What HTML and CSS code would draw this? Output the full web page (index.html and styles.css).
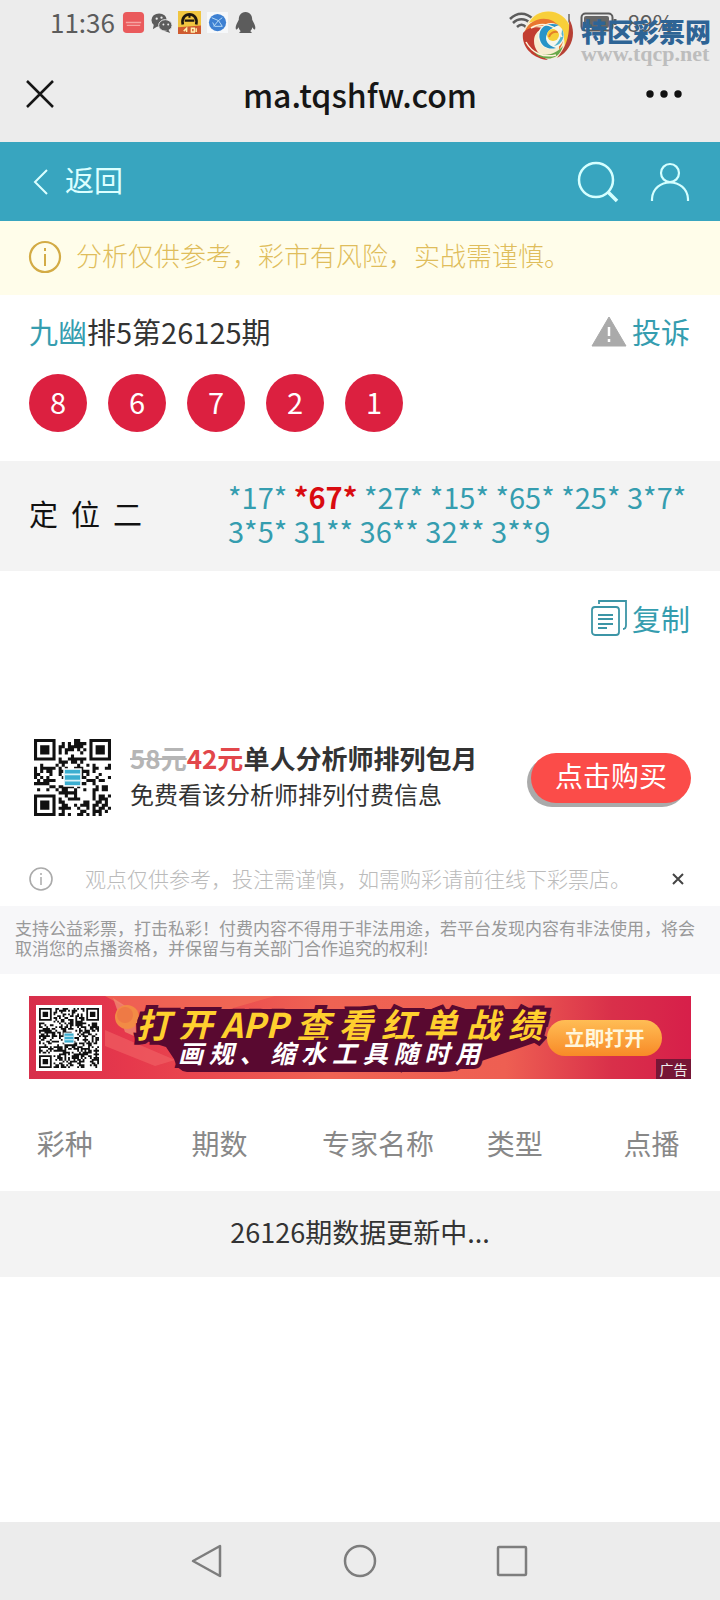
FILE: index.html
```html
<!DOCTYPE html>
<html lang="zh-CN">
<head>
<meta charset="utf-8">
<meta name="viewport" content="width=device-width, initial-scale=1">
<title>ma.tqshfw.com</title>
<link rel="stylesheet" href="styles.css">
</head>
<body>
<header class="chrome">
  <div class="status">
    <span class="clock">11:36</span>
    <svg class="app" viewBox="0 0 24 24"><rect x="1" y="1" width="22" height="22" rx="4" fill="#ea5a5c"/><path d="M4 12h16M5 15h14" stroke="#f6a5a2" stroke-width="1.5"/></svg>
    <svg class="app" viewBox="0 0 24 24"><ellipse cx="9.500" cy="9.500" rx="8" ry="7" fill="#5c5c5c"/><path d="M4 14l-1 5 5-3z" fill="#5c5c5c"/><ellipse cx="16" cy="15" rx="7" ry="6" fill="#5c5c5c" stroke="#ececec"/><path d="M19 19l2 4-5-2z" fill="#5c5c5c"/><g fill="#ececec"><circle cx="7" cy="8" r="1.200"/><circle cx="12" cy="7" r="1.200"/><circle cx="14" cy="14" r="1"/><circle cx="19" cy="14" r="1"/></g></svg>
    <svg class="app" viewBox="0 0 24 24"><path fill="#f0c540" d="M0 0h24v24H0z"/><path fill="#cf5b30" d="M0 17l24-2v9H0z"/><path d="M5 14C2 0 22 0 19 14" fill="none" stroke="#1d1710" stroke-width="2.800"/><path d="M7 10h10M12 3v4" stroke="#1d1710" stroke-width="2.200"/><path d="M6 21l3-3v4M14 18h3v4h-3zM19 18v4" stroke="#fff1b0" stroke-width="1.500" fill="none"/></svg>
    <svg class="app" viewBox="0 0 24 24"><path fill="#f6f8fa" d="M1 1h22v22H1z"/><circle cx="12" cy="12" r="9" fill="#3d80d2"/><path d="M6 7l7 3 4-3M13 10l-5 6M13 10l4 6M7 12l2 4 8 0" stroke="#b9dcf7" stroke-width="1" fill="none"/></svg>
    <svg class="app" viewBox="0 0 24 24"><path fill="#5c5c5c" d="M12 1c-5 0-7 4-7 8-2 4-4 7-3 10 1 1 2-1 3-2 0 2 1 3 2 4-2 1-2 2 0 2h10c2 0 2-1 0-2 1-1 2-2 2-4 1 1 2 3 3 2 1-3-1-6-3-10 0-4-2-8-7-8z"/></svg>
    <span class="signals">
      <svg class="wifi" viewBox="0 0 62 24"><path d="M1 9C8 2 17 2 24 9M4 13c5-5 12-5 17 0M8 17c3-3 6-3 9 0" fill="none" stroke="#5c5c5c" stroke-width="2.500"/><path d="M38 22v-6M44 22V12M50 22V8M60 22V4" stroke="#888" stroke-width="2"/></svg>
      <svg class="battery" viewBox="0 0 38 20"><rect x="1.500" y="1.500" width="31" height="17" rx="4" fill="none" stroke="#5c5c5c" stroke-width="2"/><rect x="4" y="4" width="25" height="12" rx="2" fill="#666"/><path d="M35 7v6" stroke="#5c5c5c" stroke-width="3"/></svg>
      <span class="percent">89%</span>
    </span>
  </div>
  <div class="titlebar">
    <button class="icon-btn" aria-label="关闭"><svg class="i28" viewBox="0 0 28 28"><path d="M1 1l26 26M27 1L1 27" stroke="#161616" stroke-width="2.500" fill="none"/></svg></button>
    <h1 class="domain">ma.tqshfw.com</h1>
    <button class="icon-btn more" aria-label="更多"><svg class="dots" viewBox="0 0 36 8"><g fill="#111"><circle cx="4" cy="4" r="3.700"/><circle cx="18" cy="4" r="3.700"/><circle cx="32" cy="4" r="3.700"/></g></svg></button>
  </div>
  <div class="watermark">
    <svg class="swirl" viewBox="0 0 52 52">
      <circle cx="26" cy="26" r="24" fill="#f7edd0"/>
      <path fill="#f8cf3a" d="M7 14C14-2 43-3 49 21c2 10-2 18-7 22 3-16-4-28-17-30-8-1-14-1-18 1z"/>
      <path fill="#e9762f" d="M2 27C3 13 19 6 31 12c12 7 13 20 6 29 1-13-6-23-17-24C10 17 5 21 2 27z"/>
      <path fill="#c23d30" d="M1 24C-1 38 11 50 26 51c-9-5-14-11-14-19 0-6 3-10 9-13C13 17 5 19 1 24z"/>
      <path fill="#b64035" d="M47 10c8 13 4 31-12 39 9-11 13-22 12-39z"/>
      <path fill="#69a84a" d="M10 40c9 9 22 7 31-3-3 11-12 14-19 12-5-1-9-4-12-9z"/>
      <circle cx="29" cy="27" r="13" fill="#f4f6ee"/>
      <path fill="#2794c8" d="M37 16c-14-4-22 5-19 15 2 7 9 10 16 8-8-2-12-8-9-14 2-5 7-7 12-9z"/>
      <path fill="#54b5cf" d="M40 20c4 7 0 16-8 17 5-4 8-10 8-17z"/>
      <circle cx="31" cy="26" r="6" fill="#f6cf37"/><path d="M27 28c1-4 5-6 9-5" stroke="#e47e28" stroke-width="2" fill="none"/>
      <path d="M4 33c6 11 17 16 30 13M9 19c11-7 26-3 31 9" fill="none" stroke="#fff3dc" stroke-width="1.500"/>
    </svg>
    <span class="mark-text"><span class="mark-name">特区彩票网</span><span class="mark-url">www.tqcp.net</span></span>
  </div>
</header>

<nav class="topnav">
  <a class="back" href="#"><svg class="chev" viewBox="0 0 16 26"><path d="M14 1L2 13l12 12" fill="none" stroke="#dcffff" stroke-width="2"/></svg><span class="back-text">返回</span></a>
  <a href="#" aria-label="搜索"><svg class="i42" viewBox="0 0 42 42"><circle cx="19" cy="19" r="17" fill="none" stroke="#d5ffff" stroke-width="2.500"/><path d="M31 31l9 9" stroke="#d5ffff" stroke-width="3.500"/></svg></a>
  <a href="#" aria-label="我的"><svg class="i40" viewBox="0 0 40 40"><g fill="none" stroke="#d5ffff" stroke-width="2.200"><circle cx="20" cy="11" r="9"/><path d="M2 39V37C3 15 37 15 38 37v2"/></g></svg></a>
</nav>

<div class="notice"><svg class="i34" viewBox="0 0 34 34"><circle cx="17" cy="17" r="15" fill="none" stroke="#d3ab45" stroke-width="2.200"/><path d="M17 14v12M17 8v3" stroke="#d3ab45" stroke-width="2"/></svg><p class="notice-text">分析仅供参考，彩市有风险，实战需谨慎。</p></div>

<main class="content">
  <section class="draw">
    <div class="draw-head">
      <h2 class="issue"><a href="#" class="teal">九幽</a>排5第26125期</h2>
      <a href="#" class="teal action"><svg class="warn" viewBox="0 0 36 31"><path d="M18 1L35 30H1z" fill="#aaa" stroke="#aaa" stroke-linejoin="round"/><path d="M18 11v9M18 23v3" stroke="#fff" stroke-width="2.500"/></svg>投诉</a>
    </div>
    <div class="balls"><span class="ball">8</span><span class="ball">6</span><span class="ball">7</span><span class="ball">2</span><span class="ball">1</span></div>
  </section>

  <section class="picks">
    <span class="pick-label">定  位  二</span>
    <p class="pick-list">*17* <b class="hit">*67*</b> *27* *15* *65* *25* 3*7* 3*5* 31** 36** 32** 3**9</p>
  </section>

  <div class="copy-row"><button class="teal action"><svg class="copy" viewBox="0 0 36 36"><g fill="none" stroke="#3c95a6" stroke-width="1.800"><rect x="1" y="7" width="27" height="28" rx="3"/><path d="M8 4V1h27v24c0 3-1 4-3 4M7 15h15M7 19h15M7 24h15M7 28h9"/></g></svg>复制</button></div>

  <section class="promo">
    <svg class="qr" data-size="25" data-seed="58" role="img" aria-label="二维码"></svg>
    <div class="promo-text">
      <p class="promo-title"><s class="old">58元</s><span class="price">42元</span>单人分析师排列包月</p>
      <p class="promo-sub">免费看该分析师排列付费信息</p>
    </div>
    <button class="buy">点击购买</button>
  </section>

  <div class="tip">
    <svg class="i24" viewBox="0 0 24 24"><circle cx="12" cy="12" r="11" fill="none" stroke="#aaa" stroke-width="1.600"/><path d="M12 10v8M12 6v2" stroke="#aaa" stroke-width="1.500"/></svg>
    <p class="tip-text">观点仅供参考，投注需谨慎，如需购彩请前往线下彩票店。</p>
    <button class="icon-btn" aria-label="关闭提示"><svg class="i12" viewBox="0 0 12 12"><path d="M1 1l10 10M11 1L1 11" stroke="#444" stroke-width="2"/></svg></button>
  </div>

  <p class="legal">支持公益彩票，打击私彩！付费内容不得用于非法用途，若平台发现内容有非法使用，将会取消您的点播资格，并保留与有关部门合作追究的权利!</p>

  <a class="banner" href="#">
    <svg class="banner-art" viewBox="0 0 662 83" preserveAspectRatio="none">
      <defs><linearGradient id="bg"><stop offset="0" stop-color="#d72f4b"/><stop offset=".15" stop-color="#e6384c"/><stop offset=".45" stop-color="#ef6353"/><stop offset=".72" stop-color="#ee5f52"/><stop offset=".88" stop-color="#d9304a"/><stop offset="1" stop-color="#d71f4a"/></linearGradient></defs>
      <path fill="url(#bg)" d="M0 0h662v83H0z"/>
      <path fill="#f27157" opacity=".7" d="M76 0h170l-70 20-60 2z"/>
      <path fill="#ef5e62" opacity=".7" d="M76 34l70 30-20 6-50-20z"/>
      <path fill="#f08a70" opacity=".8" d="M84 2l34 22-4 20-18-8z"/>
      <circle cx="98" cy="21" r="12" fill="#f28b45"/><circle cx="96" cy="19" r="8" fill="#ee7a45"/>
      <path fill="#590930" d="M108 28q0-14 18-15h378q16 2 13 19-1 12-12 15l-70 24q-6 5-22 5H158q-10-1-13-13l-8-12-26-8z"/>
    </svg>
    <span class="qr-card"><svg class="qr-small" data-size="33" data-seed="126" role="img" aria-label="二维码"></svg></span>
    <span class="slogan"><span class="slogan-main">打开APP查看红单战绩</span><span class="slogan-sub">画规、缩水工具随时用</span></span>
    <span class="open">立即打开</span>
    <span class="ad">广告</span>
  </a>

  <table class="list">
    <thead><tr><th class="c18">彩种</th><th class="c25">期数</th><th class="c19">专家名称</th><th class="c19">类型</th><th class="c19">点播</th></tr></thead>
    <tbody><tr><td colspan="5">26126期数据更新中...</td></tr></tbody>
  </table>
</main>

<footer class="sysnav">
  <button class="icon-btn" aria-label="返回"><svg class="i36" viewBox="0 0 36 36"><path d="M31 3v30L4 18z" fill="none" stroke="#7d7d7d" stroke-width="2.500" stroke-linejoin="round"/></svg></button>
  <button class="icon-btn" aria-label="主页"><svg class="i36" viewBox="0 0 36 36"><circle cx="18" cy="18" r="15" fill="none" stroke="#7d7d7d" stroke-width="2.500"/></svg></button>
  <button class="icon-btn" aria-label="最近任务"><svg class="i36" viewBox="0 0 36 36"><rect x="3" y="4" width="28" height="28" rx="1" fill="none" stroke="#7d7d7d" stroke-width="2.500"/></svg></button>
</footer>
<script src="qr.js"></script>
</body>
</html>
```
FILE: styles.css
```css
* { box-sizing: border-box; }
body {
  margin: 0;
  min-height: 100vh;
  display: flex;
  flex-direction: column;
  background: #fff;
  color: #333;
  font-family: "Noto Sans CJK SC", sans-serif;
  font-size: 29px;
}
h1, h2, p { margin: 0; font-weight: 400; }
a { color: inherit; text-decoration: none; }
button { font: inherit; color: inherit; background: none; border: 0; padding: 0; }
svg { display: block; flex: none; }
.i12 { width: 12px; height: 12px; }
.i24 { width: 24px; height: 24px; }
.i28 { width: 28px; height: 28px; }
.i34 { width: 34px; height: 34px; }
.i36 { width: 36px; height: 36px; }
.i40 { width: 40px; height: 40px; }
.i42 { width: 42px; height: 42px; }
.icon-btn { display: flex; align-items: center; }
.teal { color: #359daf; }
.action { display: flex; align-items: center; gap: 5px; line-height: 40px; }

.chrome { position: relative; background: #ececec; }
.status { display: flex; align-items: center; gap: 5px; height: 46px; padding: 0 46px 2px 50px; color: #5c5c5c; font-size: 26px; line-height: 30px; }
.clock { margin-right: 2px; }
.app { width: 23px; height: 23px; }
.signals { display: flex; align-items: center; gap: 9px; margin-left: auto; }
.wifi { width: 62px; height: 24px; }
.battery { width: 38px; height: 20px; }
.percent { font-size: 23px; }
.titlebar { display: grid; grid-template-columns: 1fr auto 1fr; align-items: center; height: 96px; padding: 0 26px; }
.more { justify-self: end; margin-right: 12px; }
.domain { color: #161616; font-size: 32px; font-weight: 500; line-height: 44px; }
.dots { width: 36px; height: 8px; }
.watermark { position: absolute; top: 9px; right: 9px; display: flex; gap: 7px; }
.swirl { width: 52px; height: 52px; }
.mark-text { display: flex; flex-direction: column; padding-top: 8px; }
.mark-name { color: #2e6495; font-size: 26px; font-weight: 900; line-height: 28px; }
.mark-url { color: #bdbdbd; font-family: "Liberation Serif", serif; font-size: 22px; font-weight: 700; line-height: 18px; }

.topnav { display: flex; align-items: center; gap: 31px; height: 79px; padding: 0 30px 0 33px; background: #38a5bf; color: #dcffff; }
.back { display: flex; align-items: center; gap: 16px; margin-right: auto; line-height: 40px; }
.back-text { padding-bottom: 5px; }
.chev { width: 16px; height: 26px; }
.notice { display: flex; align-items: center; gap: 14px; min-height: 74px; padding: 0 28px 2px; background: #fffdea; color: #dfbd5c; font-size: 26px; }
.notice-text { padding-bottom: 5px; font-weight: 300; }

.content { flex: 1; }
.draw { padding: 16px 30px 29px 29px; }
.draw-head { display: flex; justify-content: space-between; align-items: center; }
.issue { font-size: 29px; line-height: 40px; }
.warn { width: 36px; height: 31px; }
.balls { display: flex; gap: 21px; margin-top: 23px; }
.ball { width: 58px; height: 58px; border-radius: 50%; background: #dc2040; color: #fff; line-height: 54px; text-align: center; }
.picks { display: grid; grid-template-columns: 199px 1fr; align-items: center; padding: 18px 29px 24px; background: #f3f3f3; }
.pick-label { color: #111; white-space: pre; line-height: 40px; }
.pick-list { color: #359daf; line-height: 34px; }
.hit { color: #d90b10; }
.copy-row { display: flex; justify-content: flex-end; padding: 27px 30px 101px; }
.copy { width: 36px; height: 36px; }

.promo { display: flex; align-items: center; padding: 0 29px 0 34px; }
.qr { width: 77px; height: 77px; }
.promo-text { flex: 1; margin-left: 19px; padding-bottom: 3px; line-height: 36px; }
.promo-title { font-size: 26px; font-weight: 700; }
.promo-sub { font-size: 24px; }
.old { color: #b5b5b5; }
.price { color: #e2474b; }
.buy { width: 160px; height: 50px; padding-bottom: 6px; border-radius: 25px; background: #fb4c49; color: #fff; font-size: 28px; line-height: 44px; box-shadow: -4px 4px 0 #aaa; }
.tip { display: flex; align-items: center; min-height: 54px; margin-top: 36px; padding: 0 36px 0 29px; }
.tip-text { flex: 1; margin-left: 32px; padding-bottom: 3px; color: #bbb; font-size: 21px; font-weight: 300; }
.legal { padding: 12px 15px 16px; background: #f7f7f9; color: #999; font-size: 17px; line-height: 20px; }

.banner { position: relative; display: flex; align-items: center; height: 83px; margin: 22px 29px 17px; padding-left: 7px; }
.banner-art { position: absolute; inset: 0; width: 100%; height: 100%; }
.qr-card { position: relative; padding: 3px; background: #fff; }
.qr-small { width: 60px; height: 60px; }
.slogan { position: relative; display: flex; flex-direction: column; width: 406px; margin-left: 34px; padding-bottom: 4px; font-style: italic; white-space: nowrap; }
.slogan-main, .slogan-sub { font-weight: 700; text-align: justify; text-align-last: justify; -webkit-text-stroke: 8px #590930; paint-order: stroke fill; stroke-linejoin: round; }
.slogan-main { color: #ffd02e; font-size: 34px; line-height: 32px; }
.slogan-sub { width: 302px; margin-left: 42px; color: #fff; font-size: 25px; line-height: 24px; }
.open { position: relative; width: 115px; margin-left: 5px; border-radius: 18px; background: linear-gradient(#ffbd55, #f88a27); color: #fff6dc; font-size: 20px; font-weight: 700; line-height: 36px; text-align: center; }
.ad { position: absolute; right: 0; bottom: 0; width: 35px; background: #761636; color: #eee; font-size: 14px; line-height: 20px; text-align: center; }

.list { width: 100%; table-layout: fixed; border-collapse: collapse; text-align: center; }
.list th { height: 95px; padding: 0 0 2px; color: #888; font-size: 28px; font-weight: 400; }
.list td { height: 86px; padding: 0 0 5px; background: #f3f3f3; font-size: 27px; }
.c18 { width: 18%; }
.c25 { width: 25%; }
.c19 { width: 19%; }

.sysnav { display: flex; justify-content: center; gap: 117px; height: 78px; background: #ececec; }
```
FILE: qr.js
```js
// Fills each svg[data-size] with a code pattern: three finder squares, seeded modules, a blue centre badge.
document.querySelectorAll('svg[data-size]').forEach(function (svg) {
  var n = Number(svg.dataset.size);
  var seed = Number(svg.dataset.seed);
  var d = '';
  function random() {
    seed = (seed * 1103515245 + 12345) % 2147483648;
    return seed / 2147483648;
  }
  function finder(x, y) {
    if (x > 7) x = n - 1 - x;
    if (y > 7) y = n - 1 - y;
    if (x > 6 || y > 6) return false;
    var ring = Math.max(Math.abs(x - 3), Math.abs(y - 3));
    return ring !== 2;
  }
  for (var y = 0; y < n; y++) {
    for (var x = 0; x < n; x++) {
      var corner = (x < 8 && y < 8) || (x > n - 9 && y < 8) || (x < 8 && y > n - 9);
      var dark = corner ? finder(x, y) : random() < 0.5;
      if (dark) d += 'M' + x + ' ' + y + 'h1v1h-1z';
    }
  }
  var m = Math.floor(n / 2) - 2;
  svg.setAttribute('viewBox', '0 0 ' + n + ' ' + n);
  svg.innerHTML = '<path fill="#111" d="' + d + '"/>' +
    '<rect x="' + (m - 0.5) + '" y="' + (m - 0.5) + '" width="6" height="6" fill="#fff"/>' +
    '<rect x="' + m + '" y="' + m + '" width="5" height="5" fill="#3baed0"/>' +
    '<path d="M' + m + ' ' + (m + 1.5) + 'h5M' + m + ' ' + (m + 3.5) + 'h5" stroke="#d8f2f8" stroke-width=".6"/>';
});
```
